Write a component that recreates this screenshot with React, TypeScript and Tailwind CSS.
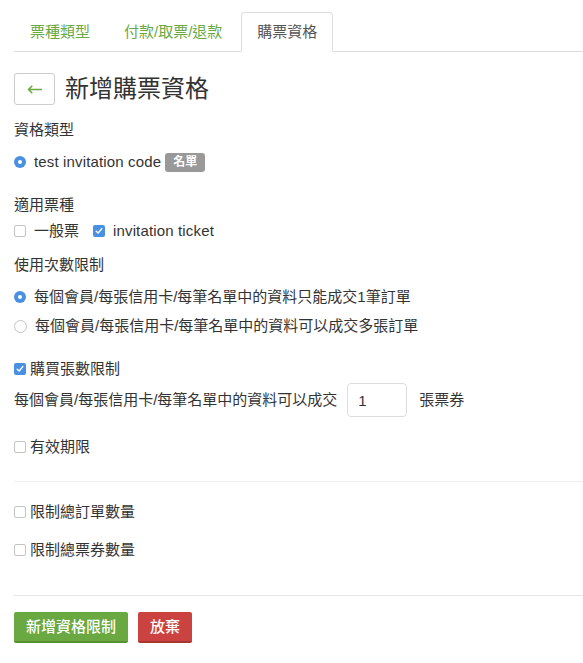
import React from "react";

const tabs = [
  { name: "票種類型", active: false },
  { name: "付款/取票/退款", active: false },
  { name: "購票資格", active: true },
];

const Radio: React.FC<{ checked?: boolean }> = ({ checked }) =>
  checked ? (
    <span className="flex h-[12px] w-[12px] shrink-0 items-center justify-center rounded-full bg-[#4a90e2]">
      <span className="h-[4px] w-[4px] rounded-full bg-white" />
    </span>
  ) : (
    <span className="h-[13px] w-[13px] shrink-0 rounded-full border border-[#c4c4c4] bg-white" />
  );

const Checkbox: React.FC<{ checked?: boolean }> = ({ checked }) =>
  checked ? (
    <span className="flex h-[12px] w-[12px] shrink-0 items-center justify-center rounded-[2px] bg-[#4a90e2]">
      <svg width="8" height="8" viewBox="0 0 8 8" fill="none">
        <path d="M1.2 4.2 L3.2 6 L6.8 1.6" stroke="white" strokeWidth="1.4" strokeLinecap="round" strokeLinejoin="round" />
      </svg>
    </span>
  ) : (
    <span className="h-[12px] w-[12px] shrink-0 rounded-[2px] border border-[#c4c4c4] bg-white" />
  );

const App: React.FC = () => {
  return (
    <div
      className="min-h-[663px] w-[583px] overflow-hidden bg-white text-[15px] leading-[20px] text-[#333]"
      style={{ fontFamily: '"Liberation Sans", "Noto Sans CJK TC", sans-serif' }}
    >
      <div className="pt-[12px] pl-[14px]">
        <ul className="flex border-b border-[#ddd]">
          {tabs.map((tab) => (
            <li key={tab.name} className="-mb-px mr-[2px]">
              <div
                className={`rounded-t-[4px] border px-[15px] py-[9px] leading-[20px] ${
                  tab.active
                    ? "ml-[1px] border-[#ddd] border-b-white bg-white text-[#555]"
                    : "border-transparent text-[#6aa842]"
                }`}
              >
                {tab.name}
              </div>
            </li>
          ))}
        </ul>

        <div className="mt-[21px] flex h-[32px] items-center">
          <button className="flex h-[32px] w-[41px] items-center justify-center rounded-[3px] border border-[#ccc] bg-white">
            <svg width="15" height="9" viewBox="0 0 15 9" fill="none">
              <path d="M14.5 4.5 H1.5 M4.8 1.2 L1.5 4.5 L4.8 7.8" stroke="#6aa842" strokeWidth="1.6" strokeLinecap="round" strokeLinejoin="round" />
            </svg>
          </button>
          <h1 className="ml-[10px] text-[24px] leading-[32px] font-normal text-[#333]">新增購票資格</h1>
        </div>

        <div className="mt-[15px] h-[20px]">資格類型</div>
        <div className="mt-[12px] flex h-[20px] items-center">
          <Radio checked />
          <span className="ml-[8px] tracking-[0.15px]">test invitation code</span>
          <span className="ml-[4px] flex h-[19px] items-center rounded-[3px] bg-[#999] px-[8px] text-[12px] font-bold text-white">
            名單
          </span>
        </div>

        <div className="mt-[23px] h-[20px]">適用票種</div>
        <div className="mt-[6px] flex h-[20px] items-center">
          <Checkbox />
          <span className="ml-[8px]">一般票</span>
          <span className="ml-[14px]">
            <Checkbox checked />
          </span>
          <span className="ml-[8px] tracking-[0.15px]">invitation ticket</span>
        </div>

        <div className="mt-[14px] h-[20px]">使用次數限制</div>
        <div className="mt-[12px] flex h-[20px] items-center">
          <Radio checked />
          <span className="ml-[8px]">每個會員/每張信用卡/每筆名單中的資料只能成交1筆訂單</span>
        </div>
        <div className="mt-[9px] flex h-[20px] items-center">
          <Radio />
          <span className="ml-[8px]">每個會員/每張信用卡/每筆名單中的資料可以成交多張訂單</span>
        </div>

        <div className="mt-[23px] flex h-[20px] items-center">
          <Checkbox checked />
          <span className="ml-[4px]">購買張數限制</span>
        </div>
        <div className="mt-[4px] flex h-[34px] items-center">
          <span>每個會員/每張信用卡/每筆名單中的資料可以成交</span>
          <input
            className="ml-[10px] h-[34px] w-[60px] rounded-[4px] border border-[#ddd] px-[10px] text-[15px] text-[#333] outline-none"
            defaultValue="1"
          />
          <span className="ml-[12px]">張票券</span>
        </div>

        <div className="mt-[20px] flex h-[20px] items-center">
          <Checkbox />
          <span className="ml-[4px]">有效期限</span>
        </div>

        <hr className="mt-[24px] border-0 border-t border-[#eee]" />

        <div className="mt-[20px] flex h-[20px] items-center">
          <Checkbox />
          <span className="ml-[4px]">限制總訂單數量</span>
        </div>
        <div className="mt-[18px] flex h-[20px] items-center">
          <Checkbox />
          <span className="ml-[4px]">限制總票券數量</span>
        </div>

        <hr className="mt-[35px] border-0 border-t border-[#e5e5e5]" />

        <div className="mt-[16px] flex gap-[10px]">
          <button className="h-[31px] rounded-[2px] border-b-[2px] border-[#56902f] bg-[#6aa842] px-[12px] text-[15px] font-medium text-white">
            新增資格限制
          </button>
          <button className="h-[31px] rounded-[2px] border-b-[2px] border-[#a83532] bg-[#cb4340] px-[12px] text-[15px] font-medium text-white">
            放棄
          </button>
        </div>
      </div>
    </div>
  );
};

export default App;
